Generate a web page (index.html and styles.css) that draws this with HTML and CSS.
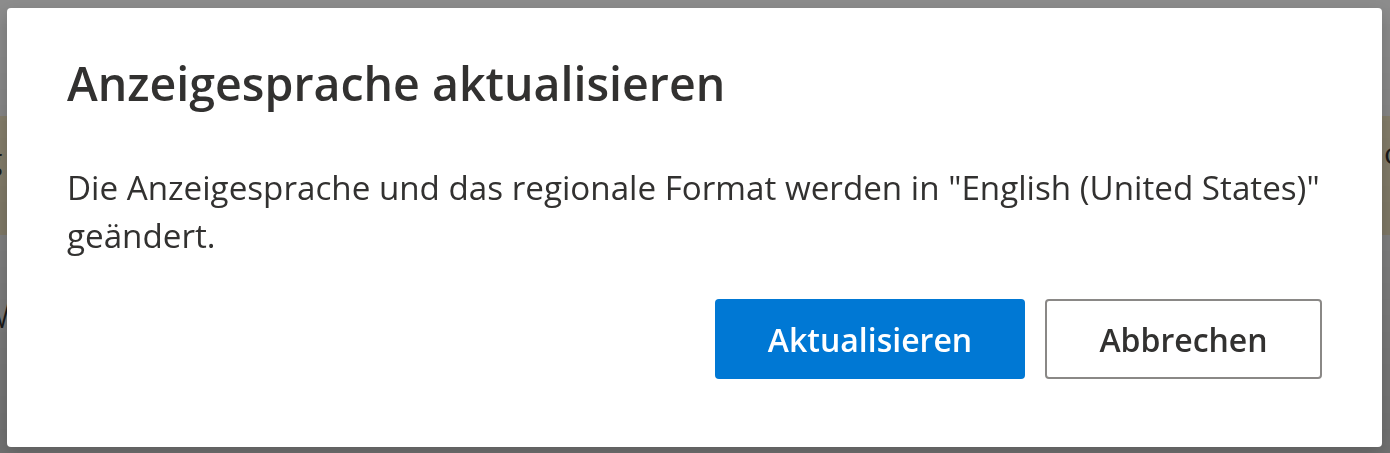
FILE: index.html
```html
<!DOCTYPE html>
<html lang="de">
<head>
    <meta charset="UTF-8">
    <meta name="viewport" content="width=device-width, initial-scale=1.0">
    <title>Anzeigesprache aktualisieren</title>
    <link rel="stylesheet" href="styles.css">
</head>

<body>
    <!-- Seite im Hintergrund -->
    <div class="page">
        <div class="banner">
            <span class="banner-left">g</span>
            <span class="banner-right">o</span>
        </div>
        <div class="page-heading">W</div>
    </div>

    <!-- Overlay + Dialog -->
    <div class="overlay">
        <div class="dialog" role="dialog" aria-labelledby="dlg-title">
            <h1 id="dlg-title" class="dialog-title">Anzeigesprache aktualisieren</h1>
            <p class="dialog-text">Die Anzeigesprache und das regionale Format werden in "English (United States)" geändert.</p>
            <div class="dialog-actions">
                <button class="btn btn-primary">Aktualisieren</button>
                <button class="btn btn-default">Abbrechen</button>
            </div>
        </div>
    </div>
</body>
</html>
```

FILE: styles.css
```css
/* Reset */
* {
    margin: 0;
    padding: 0;
    box-sizing: border-box;
}

body {
    font-family: 'Open Sans', 'Noto Sans', sans-serif;
    background-color: #ffffff;
    color: #323130;
    width: 1390px;
    height: 453px;
    overflow: hidden;
}

/* Hintergrundseite */
.page {
    padding-top: 116px;
}

.banner {
    height: 119px;
    background-color: #fdf0cc;
    display: flex;
    justify-content: space-between;
    align-items: center;
    font-size: 30px;
    color: #323130;
    padding-bottom: 34px;
}

.banner-left {
    margin-left: -14px;
}

.banner-right {
    margin-right: -12px;
    margin-top: -12px;
}

.page-heading {
    margin-top: 50px;
    margin-left: -24px;
    font-size: 40px;
    font-weight: 300;
}

/* Overlay */
.overlay {
    position: fixed;
    inset: 0;
    background: linear-gradient(rgba(0, 0, 0, 0.45), rgba(0, 0, 0, 0.56));
}

.dialog {
    position: absolute;
    top: 8px;
    left: 7px;
    right: 8px;
    bottom: 6px;
    background-color: #ffffff;
    border-radius: 4px;
    box-shadow: 0 6px 18px rgba(0, 0, 0, 0.18);
    padding: 40px 60px 68px 60px;
    display: flex;
    flex-direction: column;
}

.dialog-title {
    font-size: 46.5px;
    font-weight: 600;
    line-height: 70px;
    color: #323130;
}

.dialog-text {
    margin-top: 46px;
    margin-right: -30px;
    font-size: 33.2px;
    line-height: 48px;
}

.dialog-actions {
    margin-top: auto;
    display: flex;
    justify-content: flex-end;
    gap: 20px;
}

.btn {
    height: 80px;
    border-radius: 4px;
    font-family: inherit;
    font-size: 32px;
    font-weight: 600;
    cursor: pointer;
}

.btn-primary {
    width: 310px;
    background-color: #0078d4;
    border: none;
    color: #ffffff;
}

.btn-default {
    width: 277px;
    background-color: #ffffff;
    border: 2px solid #8a8886;
    color: #323130;
}
```
